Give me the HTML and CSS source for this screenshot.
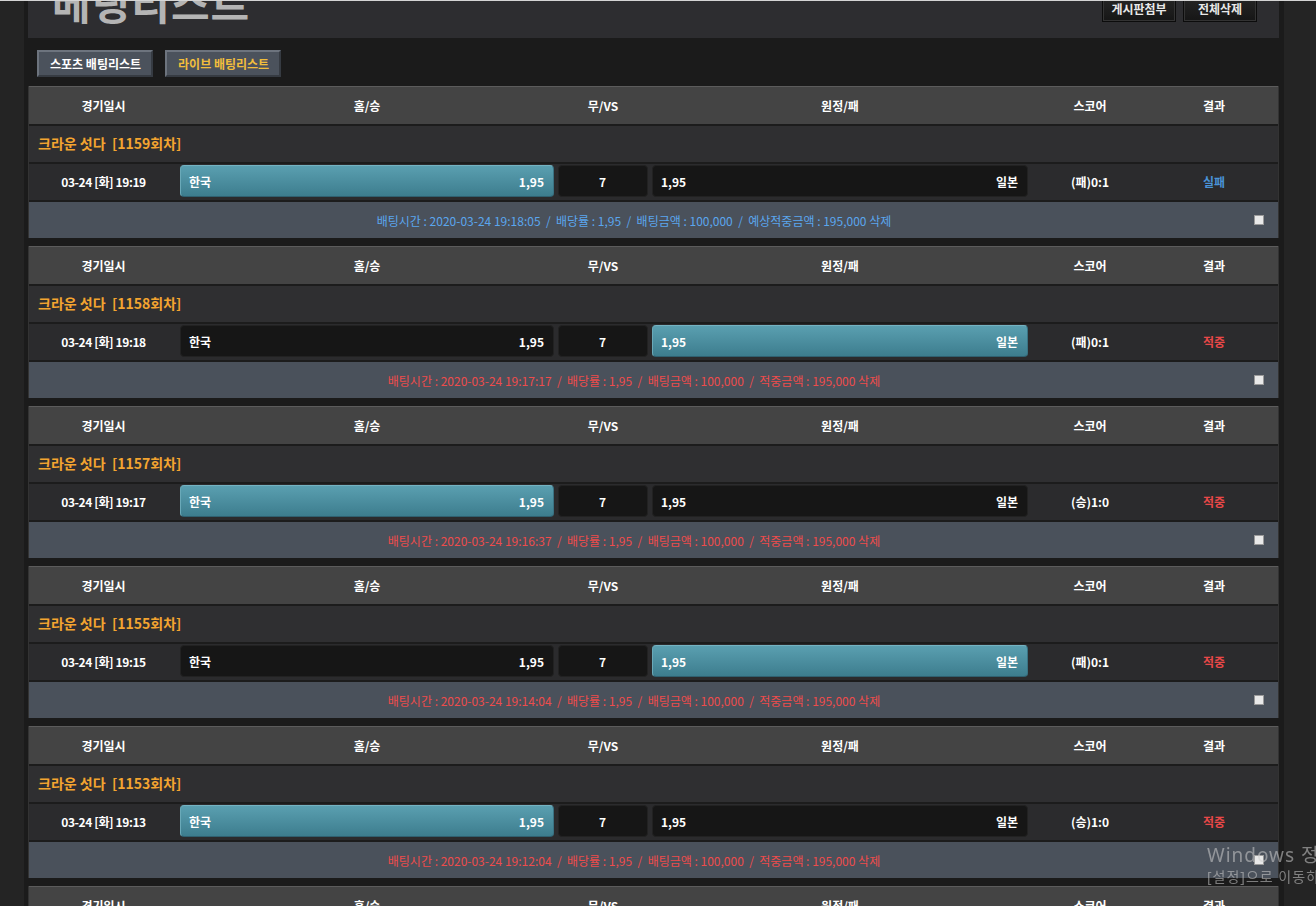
FILE: index.html
```html
<!DOCTYPE html>
<html>
<head>
    <meta charset="utf-8">
    <title>베팅리스트</title>
    <link rel="stylesheet" href="styles.css">
</head>
<body>
    <div class="wrap">
        <div class="top">
            <h1 class="title">베팅리스트</h1>
            <div class="top-btns">
                <button class="top-btn">게시판첨부</button>
                <button class="top-btn">전체삭제</button>
            </div>
        </div>

        <div class="tabs">
            <a class="tab">스포츠 배팅리스트</a>
            <a class="tab live">라이브 배팅리스트</a>
        </div>

        <!-- 1159 -->
        <div class="bet-card">
            <div class="row head">
                <div>경기일시</div><div>홈/승</div><div>무/VS</div><div>원정/패</div><div>스코어</div><div>결과</div>
            </div>
            <div class="game-title">크라운 섯다 &nbsp;[1159회차]</div>
            <div class="row bet">
                <div>03-24 [화] 19:19</div>
                <div><span class="pick on"><span>한국</span><span>1,95</span></span></div>
                <div><span class="pick vs">7</span></div>
                <div><span class="pick"><span>1,95</span><span>일본</span></span></div>
                <div>(패)0:1</div>
                <div class="res lose">실패</div>
            </div>
            <div class="info lose">
                <div class="info-text">배팅시간 : 2020-03-24 19:18:05 &nbsp;/ &nbsp;배당률 : 1,95 &nbsp;/ &nbsp;배팅금액 : 100,000 &nbsp;/ &nbsp;예상적중금액 : 195,000 삭제</div>
                <div class="chk-cell"><span class="chk"></span></div>
            </div>
        </div>

        <!-- 1158 -->
        <div class="bet-card">
            <div class="row head">
                <div>경기일시</div><div>홈/승</div><div>무/VS</div><div>원정/패</div><div>스코어</div><div>결과</div>
            </div>
            <div class="game-title">크라운 섯다 &nbsp;[1158회차]</div>
            <div class="row bet">
                <div>03-24 [화] 19:18</div>
                <div><span class="pick"><span>한국</span><span>1,95</span></span></div>
                <div><span class="pick vs">7</span></div>
                <div><span class="pick on"><span>1,95</span><span>일본</span></span></div>
                <div>(패)0:1</div>
                <div class="res win">적중</div>
            </div>
            <div class="info win">
                <div class="info-text">배팅시간 : 2020-03-24 19:17:17 &nbsp;/ &nbsp;배당률 : 1,95 &nbsp;/ &nbsp;배팅금액 : 100,000 &nbsp;/ &nbsp;적중금액 : 195,000 삭제</div>
                <div class="chk-cell"><span class="chk"></span></div>
            </div>
        </div>

        <!-- 1157 -->
        <div class="bet-card">
            <div class="row head">
                <div>경기일시</div><div>홈/승</div><div>무/VS</div><div>원정/패</div><div>스코어</div><div>결과</div>
            </div>
            <div class="game-title">크라운 섯다 &nbsp;[1157회차]</div>
            <div class="row bet">
                <div>03-24 [화] 19:17</div>
                <div><span class="pick on"><span>한국</span><span>1,95</span></span></div>
                <div><span class="pick vs">7</span></div>
                <div><span class="pick"><span>1,95</span><span>일본</span></span></div>
                <div>(승)1:0</div>
                <div class="res win">적중</div>
            </div>
            <div class="info win">
                <div class="info-text">배팅시간 : 2020-03-24 19:16:37 &nbsp;/ &nbsp;배당률 : 1,95 &nbsp;/ &nbsp;배팅금액 : 100,000 &nbsp;/ &nbsp;적중금액 : 195,000 삭제</div>
                <div class="chk-cell"><span class="chk"></span></div>
            </div>
        </div>

        <!-- 1155 -->
        <div class="bet-card">
            <div class="row head">
                <div>경기일시</div><div>홈/승</div><div>무/VS</div><div>원정/패</div><div>스코어</div><div>결과</div>
            </div>
            <div class="game-title">크라운 섯다 &nbsp;[1155회차]</div>
            <div class="row bet">
                <div>03-24 [화] 19:15</div>
                <div><span class="pick"><span>한국</span><span>1,95</span></span></div>
                <div><span class="pick vs">7</span></div>
                <div><span class="pick on"><span>1,95</span><span>일본</span></span></div>
                <div>(패)0:1</div>
                <div class="res win">적중</div>
            </div>
            <div class="info win">
                <div class="info-text">배팅시간 : 2020-03-24 19:14:04 &nbsp;/ &nbsp;배당률 : 1,95 &nbsp;/ &nbsp;배팅금액 : 100,000 &nbsp;/ &nbsp;적중금액 : 195,000 삭제</div>
                <div class="chk-cell"><span class="chk"></span></div>
            </div>
        </div>

        <!-- 1153 -->
        <div class="bet-card">
            <div class="row head">
                <div>경기일시</div><div>홈/승</div><div>무/VS</div><div>원정/패</div><div>스코어</div><div>결과</div>
            </div>
            <div class="game-title">크라운 섯다 &nbsp;[1153회차]</div>
            <div class="row bet">
                <div>03-24 [화] 19:13</div>
                <div><span class="pick on"><span>한국</span><span>1,95</span></span></div>
                <div><span class="pick vs">7</span></div>
                <div><span class="pick"><span>1,95</span><span>일본</span></span></div>
                <div>(승)1:0</div>
                <div class="res win">적중</div>
            </div>
            <div class="info win">
                <div class="info-text">배팅시간 : 2020-03-24 19:12:04 &nbsp;/ &nbsp;배당률 : 1,95 &nbsp;/ &nbsp;배팅금액 : 100,000 &nbsp;/ &nbsp;적중금액 : 195,000 삭제</div>
                <div class="chk-cell"><span class="chk"></span></div>
            </div>
        </div>

        <!-- 1151 -->
        <div class="bet-card">
            <div class="row head">
                <div>경기일시</div><div>홈/승</div><div>무/VS</div><div>원정/패</div><div>스코어</div><div>결과</div>
            </div>
            <div class="game-title">크라운 섯다 &nbsp;[1151회차]</div>
        </div>
    </div>

    <div class="watermark">
        <div class="wm-big">Windows 정품 인증</div>
        <div class="wm-small">[설정]으로 이동하여 Windows를 정품 인증합니다.</div>
    </div>
</body>
</html>
```

FILE: styles.css
```css
html, body {
    height: 100%;
    overflow: hidden;
}

body {
    margin: 0;
    border-top: 1px solid #d4d4d4;
    background-color: #242424;
    font-family: "Noto Sans CJK KR", "Noto Sans", sans-serif;
    font-size: 12px;
    color: #fff;
}

.wrap {
    width: 1251px;
    margin-left: 24px;
    padding: 0 5px 0 4px;
    background-color: #1b1b1b;
    min-height: 100%;
}

/* top title bar */
.top {
    height: 37px;
    background-color: #2d2d30;
    display: flex;
    justify-content: space-between;
    overflow: hidden;
}

.title {
    margin: -20px 0 0 24px;
    font-size: 42px;
    line-height: 1;
    font-weight: bold;
    letter-spacing: 1px;
    color: #b4b4b4;
}

.top-btns {
    display: flex;
    gap: 7px;
    padding-right: 22px;
}

.top-btn {
    margin-top: -6px;
    width: 74px;
    height: 27px;
    padding: 0;
    background: linear-gradient(#262626, #161616);
    border: 1px solid #0c0c0c;
    box-shadow: inset 0 0 0 1px #333;
    color: #e8e8e8;
    font-family: inherit;
    font-size: 12px;
    font-weight: bold;
}

/* tabs */
.tabs {
    height: 48px;
    display: flex;
    gap: 12px;
    padding: 12px 0 0 9px;
    box-sizing: border-box;
}

.tab {
    height: 27px;
    box-sizing: border-box;
    padding: 0 10px 0 11px;
    display: flex;
    align-items: center;
    background-color: #4b525c;
    border: 2px solid;
    border-color: #6d747e #363b42 #363b42 #6d747e;
    font-weight: bold;
    color: #fff;
}

.tab.live {
    color: #f2be3c;
}

/* bet cards */
.bet-card {
    margin-bottom: 8px;
    border-left: 1px solid #333;
    border-right: 1px solid #333;
}

.row {
    display: grid;
    grid-template-columns: 149px 378px 94px 380px 120px 1fr;
    align-items: center;
    text-align: center;
    font-weight: bold;
}

.head {
    height: 37px;
    background-color: #444;
    border-top: 1px solid #5c5c5c;
}

.game-title {
    height: 34px;
    padding-bottom: 2px;
    border-top: 2px solid #1c1c1c;
    background-color: #2f2f31;
    display: flex;
    align-items: center;
    padding-left: 9px;
    font-size: 14px;
    font-weight: bold;
    color: #f4a530;
}

.bet {
    height: 34px;
    padding-bottom: 2px;
    border-top: 2px solid #1c1c1c;
    background-color: #2b2b2d;
}

.bet > div:first-child {
    letter-spacing: -0.4px;
}

.pick {
    margin: 0 2px;
    height: 32px;
    box-sizing: border-box;
    display: flex;
    justify-content: space-between;
    align-items: center;
    padding: 0 9px 0 8px;
    background-color: #161616;
    border: 1px solid #222;
    border-radius: 4px;
}

.pick.vs {
    justify-content: center;
}

.pick.on {
    background: linear-gradient(#5a9fb0, #3d7d8e);
    border-color: #75b3c2 #3a7282 #2f6070 #6aa9b8;
}

.res.lose {
    color: #4a93d8;
}

.res.win {
    color: #e84848;
}

.info {
    height: 36px;
    border-top: 2px solid #1c1c1c;
    background-color: #4a515b;
    display: flex;
    align-items: center;
}

.info-text {
    flex: 1;
    text-align: center;
}

.info.lose .info-text {
    color: #5aa6ee;
}

.info.win .info-text {
    color: #ee4c4c;
}

.chk-cell {
    width: 39px;
    display: flex;
    justify-content: center;
}

.chk {
    width: 8px;
    height: 8px;
    border: 1px solid #9a9a9a;
    background-color: #e9e9e9;
}

/* os watermark */
.watermark {
    position: fixed;
    left: 1207px;
    top: 842px;
    white-space: nowrap;
    font-family: "Noto Sans", "Noto Sans CJK KR", sans-serif;
    color: rgba(205, 205, 205, 0.55);
    letter-spacing: 1px;
}

.wm-big {
    font-size: 19px;
    line-height: 26px;
}

.wm-small {
    font-size: 14px;
    line-height: 18px;
}
```
